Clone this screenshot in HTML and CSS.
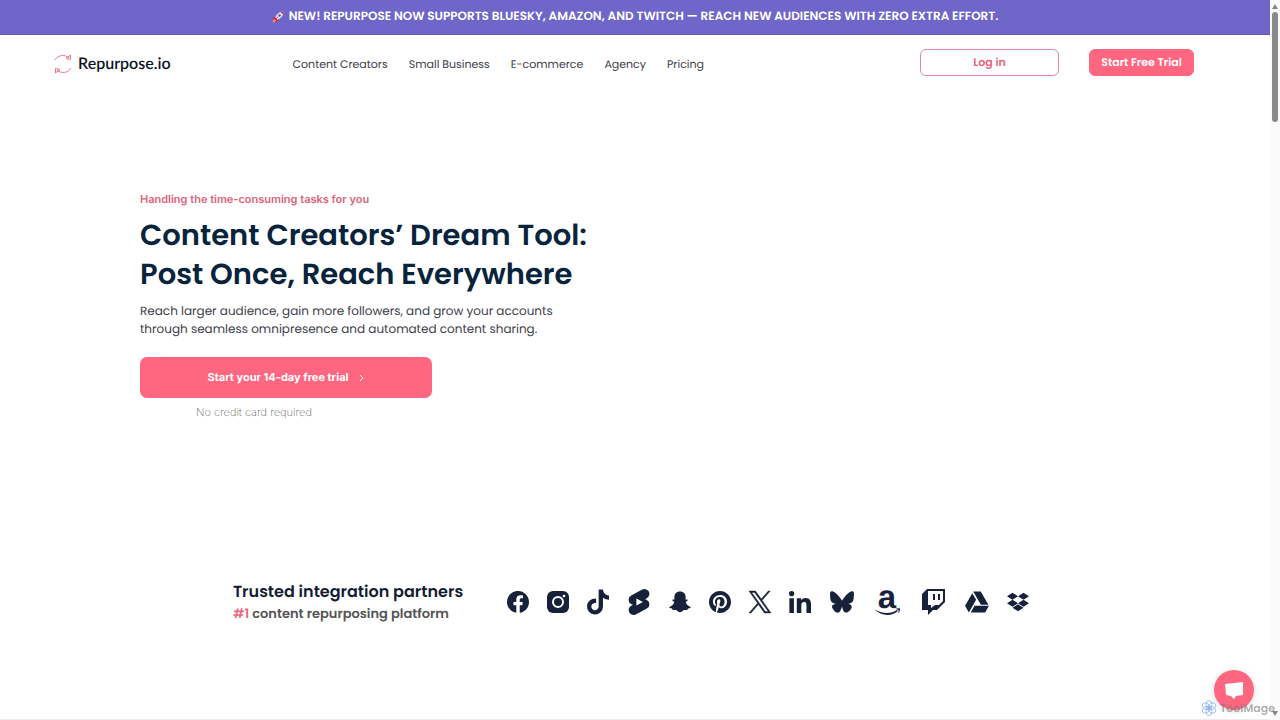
FILE: index.html
```html
<!DOCTYPE html>
<html lang="en">
<head>
<meta charset="UTF-8">
<title>Repurpose.io</title>
<meta name="viewport" content="width=device-width, initial-scale=1.0">
<link rel="stylesheet" href="styles.css">
</head>
<body>

	<div class="banner">
		<svg class="rocket" viewBox="0 0 24 24" aria-hidden="true">
			<path d="M7 10L2 14l1 3 5-1zM14 17l-4 5-3-1 1-5z" fill="#c9244d"/>
			<path d="M5 16c-3 1-3 4-4 7 3-1 6-1 7-4z" fill="#f59a3c"/>
			<path d="M6 14C9 6 15 1 23 1c0 8-5 14-13 17z" fill="#e9e4f2"/>
			<path d="M17 2l6-1-1 6zM6 13l5 5-2 2-5-5z" fill="#c9244d"/>
			<circle cx="15" cy="9" r="2.500" fill="#4a5a8c"/>
			<path d="M12 11l-5 6" stroke="#c9244d" stroke-width="2"/>
		</svg>
		<p>NEW! REPURPOSE NOW SUPPORTS BLUESKY, AMAZON, AND TWITCH — REACH NEW AUDIENCES WITH ZERO EXTRA EFFORT.</p>
	</div>

	<header class="header">
		<a class="logo" href="#">
			<svg viewBox="0 0 18 20" aria-hidden="true">
				<path d="M1 6A9 9 0 0 1 15 4M17 14A9 9 0 0 1 3 16M12 4.500l4.500 1V1zM6 15.500l-4.500-1V19z"/>
			</svg>
			<span>Repurpose.io</span>
		</a>
		<nav class="nav">
			<a href="#">Content Creators</a>
			<a href="#">Small Business</a>
			<a href="#">E-commerce</a>
			<a href="#">Agency</a>
			<a href="#">Pricing</a>
		</nav>
		<div class="actions">
			<a class="btn btn-outline" href="#">Log in</a>
			<a class="btn btn-fill" href="#">Start Free Trial</a>
		</div>
	</header>

	<main>
		<section class="hero">
			<p class="eyebrow">Handling the time-consuming tasks for you</p>
			<h1>Content Creators’ Dream Tool:<br>Post Once, Reach Everywhere</h1>
			<p class="lead">Reach larger audience, gain more followers, and grow your accounts<br>through seamless omnipresence and automated content sharing.</p>
			<a class="cta" href="#">Start your 14-day free trial
				<svg viewBox="0 0 6 8" aria-hidden="true"><path d="M1 1l3 3-3 3"/></svg>
			</a>
			<p class="note">No credit card required</p>
		</section>

		<section class="partners">
			<div>
				<h2>Trusted integration partners</h2>
				<p class="rank"><strong>#1</strong> content repurposing platform</p>
			</div>
			<div class="icons">
				<svg viewBox="8 8 496 496" role="img" aria-label="Facebook"><path d="M504 256C504 119 393 8 256 8S8 119 8 256c0 123.780 90.690 226.380 209.250 245V327.690h-63V256h63v-54.640c0-62.150 37-96.480 93.670-96.480 27.140 0 55.520 4.840 55.520 4.840v61h-31.280c-30.800 0-40.410 19.120-40.410 38.730V256h68.780l-11 71.690h-57.780V501C413.310 482.380 504 379.780 504 256z"/></svg>
				<svg viewBox="0 0 22 22" role="img" aria-label="Instagram"><rect width="22" height="22" rx="6"/><circle cx="11" cy="11" r="5" fill="none" stroke="#fff" stroke-width="2"/><circle cx="17" cy="5" r="1.300" fill="#fff"/></svg>
				<svg class="tall" viewBox="0 0 448 512" role="img" aria-label="TikTok"><path d="M448 209.910a210.060 210.060 0 0 1-122.770-39.250V349.380A162.550 162.550 0 1 1 185 188.310V278.200a74.620 74.620 0 1 0 52.230 71.180V0h88a121.180 121.180 0 0 0 1.860 22.170A122.180 122.180 0 0 0 381 102.390a121.430 121.430 0 0 0 67 20.140z"/></svg>
				<svg class="tall medium" viewBox="1 0 22 24" role="img" aria-label="YouTube Shorts"><path d="m18.931 9.990-1.441-.601 1.717-.913a4.480 4.480 0 0 0 1.874-6.078 4.506 4.506 0 0 0-6.090-1.874L4.792 5.929a4.504 4.504 0 0 0-2.402 4.193 4.521 4.521 0 0 0 2.666 3.904c.036.012 1.442.6 1.442.6l-1.706.901a4.510 4.510 0 0 0-2.369 3.967A4.528 4.528 0 0 0 6.930 24c.725 0 1.437-.174 2.080-.508l10.210-5.406a4.494 4.494 0 0 0 2.390-4.192 4.525 4.525 0 0 0-2.678-3.904ZM9.597 15.190V8.824l6.007 3.184z"/></svg>
				<svg viewBox="0 0 22 22" role="img" aria-label="Snapchat"><path d="M11 .5c3.600 0 5.600 2.300 5.600 5.500v2.600c.8.300 1.900-.4 2.200.3.300.8-1.700 1.300-1.900 2.200-.1 1.900 2.200 4 4.300 4.600.8.300.7.900-.2 1.300-.8.400-2 .4-2.200.7-.3.400-.1 1.100-.6 1.300-.8.200-2-.3-3.200 0-1.200.4-2.200 2.200-4 2.200s-2.800-1.800-4-2.200c-1.200-.3-2.400.2-3.200 0-.5-.2-.3-.9-.6-1.300-.2-.3-1.400-.3-2.200-.7-.9-.4-1-1-.2-1.300 2.100-.6 4.400-2.700 4.300-4.600-.2-.9-2.200-1.400-1.900-2.200.3-.7 1.400 0 2.200-.3V6C5.400 2.800 7.400.5 11 .5z"/></svg>
				<svg viewBox="0 8 496 496" role="img" aria-label="Pinterest"><path d="M496 256c0 137-111 248-248 248-25.600 0-50.200-3.900-73.400-11.100 10.100-16.500 25.200-43.500 30.800-65 3-11.600 15.400-59 15.400-59 8.100 15.400 31.700 28.500 56.800 28.500 74.800 0 128.700-68.800 128.700-154.300 0-81.900-66.900-143.200-152.900-143.200-107 0-163.900 71.800-163.900 150.100 0 36.400 19.400 81.700 50.300 96.100 4.700 2.200 7.200 1.200 8.300-3.300.8-3.400 5-20.300 6.900-28.100.6-2.500.3-4.700-1.700-7.100-10.100-12.500-18.300-35.300-18.300-56.600 0-54.700 41.400-107.600 112-107.600 60.900 0 103.600 41.500 103.600 100.900 0 67.100-33.900 113.600-78 113.600-24.300 0-42.600-20.100-36.700-44.800 7-29.500 20.500-61.300 20.500-82.600 0-19-10.200-34.900-31.400-34.900-24.900 0-44.900 25.700-44.900 60.200 0 22 7.400 36.800 7.400 36.800s-24.500 103.800-29 123.200c-5 21.400-3 51.600-.9 71.200C65.400 450.900 0 361.100 0 256 0 119 111 8 248 8s248 111 248 248z"/></svg>
				<svg viewBox="0 0 24 24" role="img" aria-label="X"><path class="x-mark" d="M14.258 10.152L23.176 0h-2.113l-7.747 8.813L7.133 0H0l9.352 13.328L0 23.973h2.113l8.176-9.309 6.531 9.309h7.133zm-2.895 3.293l-.949-1.328L2.875 1.560h3.246l6.086 8.523.945 1.328 7.910 11.078h-3.246z"/></svg>
				<svg viewBox="0 0 448 448" role="img" aria-label="LinkedIn"><path d="M100.280 448H7.400V148.900h92.880zM53.790 108.100C24.090 108.100 0 83.500 0 53.800a53.790 53.790 0 0 1 107.580 0c0 29.700-24.100 54.300-53.790 54.300zM447.900 448h-92.680V302.400c0-34.700-.7-79.200-48.290-79.200-48.290 0-55.690 37.700-55.690 76.700V448h-92.780V148.900h89.080v40.800h1.300c12.400-23.500 42.690-48.300 87.880-48.300 94 0 111.280 61.900 111.280 142.300V448z"/></svg>
				<svg class="wide" viewBox="0 1 24 22" role="img" aria-label="Bluesky"><path d="M12 10.800c-1.087-2.114-4.046-6.053-6.798-7.995C2.566.944 1.561 1.266.902 1.565.139 1.908 0 3.080 0 3.768c0 .690.378 5.650.624 6.479.815 2.736 3.713 3.660 6.383 3.364-3.912.580-7.387 2.005-2.830 7.078 5.013 5.190 6.870-1.113 7.823-4.308.953 3.195 2.050 9.271 7.733 4.308 4.267-4.308 1.172-6.498-2.740-7.078 2.670.297 5.568-.628 6.383-3.364.246-.828.624-5.790.624-6.478 0-.690-.139-1.861-.902-2.206-.659-.298-1.664-.620-4.300 1.240C16.046 4.748 13.087 8.687 12 10.800Z"/></svg>
				<svg class="tall wider" viewBox="0 0 28 26" role="img" aria-label="Amazon"><text class="amazon-a" x="14" y="19" text-anchor="middle">a</text><path d="M1 20c8 5 17 5 23 1l1 1c-7 6-17 5-24-2zM22 20c2-1 4-1 5-.5.500 1-.5 3.500-2 5 .3-1.500 1-3 .5-3.500s-2-.5-3.500-1z"/></svg>
				<svg class="tall wider" viewBox="-2 0 28 26" role="img" aria-label="Twitch"><path fill-rule="evenodd" d="M6 0L1 5v16h6v5l5-5h4l8-8V0zM7 2h15v10l-4 4h-4l-4 3v-3H7zM12 5h2v6h-2zM17 5h2v6h-2z"/></svg>
				<svg class="medium" viewBox="0 20 512 472" role="img" aria-label="Google Drive"><path d="M339 314.900L175.400 32h161.200l163.600 282.900H339zm-137.500 23.600L120.900 480h310.500L512 338.500H201.500zM154.100 67.400L0 338.500 80.600 480 237 208.800 154.100 67.400z"/></svg>
				<svg viewBox="0 0 528 512" role="img" aria-label="Dropbox"><path d="M264.400 116.300l-132 84.300 132 84.300-132 84.300L0 284.100l132.300-84.300L0 116.300 132.300 32l132.100 84.300zM131.600 395.700l132-84.300 132 84.300-132 84.300-132-84.300zm132.800-111.600l132-84.300-132-83.600L395.700 32 528 116.300l-132.300 84.300L528 284.800l-132.300 84.300-131.300-85z"/></svg>
			</div>
		</section>
	</main>

	<!-- chat launcher -->
	<button class="chat" type="button" aria-label="Open chat">
		<svg viewBox="0 0 20 17" aria-hidden="true"><path d="M1 2l18-2v13l-7 1-2 3-3-3-5-1z"/></svg>
	</button>

	<div class="watermark">
		<svg viewBox="0 0 16 16" aria-hidden="true">
			<circle cx="8" cy="8" r="2"/>
			<ellipse cx="8" cy="4.500" rx="3" ry="4"/>
			<ellipse cx="8" cy="4.500" rx="3" ry="4" transform="rotate(60 8 8)"/>
			<ellipse cx="8" cy="4.500" rx="3" ry="4" transform="rotate(120 8 8)"/>
			<ellipse cx="8" cy="4.500" rx="3" ry="4" transform="rotate(180 8 8)"/>
			<ellipse cx="8" cy="4.500" rx="3" ry="4" transform="rotate(240 8 8)"/>
			<ellipse cx="8" cy="4.500" rx="3" ry="4" transform="rotate(300 8 8)"/>
		</svg>
		<span>ToolMage</span>
	</div>

	<div class="scrollbar" aria-hidden="true">
		<svg viewBox="0 0 10 8"><path d="M5 2l3 5H2z"/></svg>
		<div class="thumb"></div>
		<svg class="down" viewBox="0 0 10 8"><path d="M5 6l3-5H2z"/></svg>
	</div>

</body>
</html>
```
FILE: styles.css
```css
* {
	box-sizing: border-box;
}

body {
	margin: 0;
	padding-right: 10px;
	min-height: 100vh;
	font-family: Poppins, Inter, sans-serif;
	text-rendering: geometricPrecision;
	color: #40404a;
	background-color: #fff;
	border-bottom: 1px solid #f3e9eb;
}

h1, h2, p {
	margin: 0;
}

a {
	color: inherit;
	text-decoration: none;
}

.banner {
	display: flex;
	justify-content: center;
	align-items: center;
	gap: 5px;
	padding: 9px 20px;
	color: #fff;
	background-color: #6e66c8;
	border-bottom: 1px solid #655bb5;
	font-size: 12px;
	font-weight: 600;
	line-height: 16px;
}

.rocket {
	width: 12px;
	height: 12px;
}

/* header */
.header {
	display: flex;
	align-items: center;
	padding: 14px 76px 14px 54px;
}

.logo {
	display: flex;
	align-items: center;
	gap: 6px;
	margin-right: 122px;
	padding-top: 2px;
	color: #0b1526;
	font-family: Lato, sans-serif;
	font-size: 16px;
	font-weight: 600;
}

.logo svg {
	width: 18px;
	height: 20px;
	fill: none;
	stroke: #e8788a;
}

.nav {
	display: flex;
	gap: 21px;
	padding-top: 3px;
	font-size: 11px;
}

.actions {
	display: flex;
	gap: 30px;
	margin-left: auto;
}

.btn {
	padding: 4px 11px;
	border: 1px solid #ff6680;
	border-radius: 6px;
	font-size: 11px;
	font-weight: 600;
	line-height: 17px;
	text-align: center;
	white-space: nowrap;
}

.btn-outline {
	min-width: 139px;
	color: #e8637b;
	border-color: #dc8a9b;
}

.btn-fill {
	min-width: 105px;
	color: #fff;
	background-color: #ff6680;
}

/* hero */
.hero {
	display: flex;
	flex-direction: column;
	align-items: flex-start;
	max-width: 990px;
	margin: 0 auto;
	padding: 101px 0 160px;
}

.eyebrow {
	color: #e0637a;
	font-family: Inter, sans-serif;
	font-size: 11px;
	font-weight: 600;
	line-height: 16px;
}

h1 {
	margin-top: 10px;
	color: #08233c;
	font-size: 29px;
	font-weight: 600;
	line-height: 39px;
}

.lead {
	margin-top: 8px;
	font-size: 12px;
	line-height: 18px;
}

.cta {
	display: flex;
	justify-content: center;
	align-items: center;
	gap: 10px;
	width: 292px;
	margin-top: 18px;
	padding: 12px;
	color: #fff;
	background-color: #ff6680;
	border-radius: 7px;
	font-family: Inter, sans-serif;
	font-size: 11px;
	font-weight: 700;
	line-height: 17px;
}

.cta svg {
	width: 6px;
	height: 8px;
	fill: none;
	stroke: #fff;
}

.note {
	margin-top: 6px;
	padding-left: 56px;
	color: #666;
	font-family: Inter, sans-serif;
	font-size: 11px;
	font-weight: 200;
	line-height: 16px;
}

/* partners */
.partners {
	display: flex;
	justify-content: center;
	align-items: center;
	gap: 44px;
	padding: 0 20px 88px 12px;
	white-space: nowrap;
}

h2 {
	color: #131c33;
	font-size: 16px;
	font-weight: 600;
	line-height: 24px;
}

.rank {
	color: #555;
	font-size: 13px;
	font-weight: 600;
	line-height: 20px;
}

.rank strong {
	color: #ea6a80;
	font-weight: 600;
}

.icons {
	display: flex;
	align-items: center;
	gap: 18px;
}

.icons svg {
	width: 22px;
	height: 22px;
	fill: #18213a;
	overflow: visible;
}

.icons .medium {
	width: 24px;
}

.icons .wide {
	width: 26px;
}

.icons .wider {
	width: 28px;
}

.icons .tall {
	height: 26px;
}

.x-mark {
	stroke: #18213a;
	stroke-width: 0.5;
}

.amazon-a {
	font-family: "Liberation Sans", sans-serif;
	font-size: 33px;
	font-weight: 700;
}

/* floating items */
.chat {
	position: fixed;
	right: 26px;
	bottom: 10px;
	display: flex;
	justify-content: center;
	align-items: center;
	width: 40px;
	height: 40px;
	padding: 0;
	border: 0;
	border-radius: 50%;
	background-color: #ff6680;
	box-shadow: 0 1px 6px rgba(0, 0, 0, 0.15);
}

.chat svg {
	width: 20px;
	height: 17px;
	fill: #fff;
}

.watermark {
	position: fixed;
	right: 5px;
	bottom: 4px;
	z-index: 2;
	display: flex;
	align-items: center;
	gap: 3px;
	color: rgba(120, 120, 120, 0.6);
	font-size: 11px;
	font-weight: 600;
	line-height: 16px;
}

.watermark svg {
	width: 16px;
	height: 16px;
	fill: none;
	stroke: #8db4ee;
	stroke-width: 0.8;
}

.scrollbar {
	position: fixed;
	top: 0;
	right: 0;
	bottom: 0;
	display: flex;
	flex-direction: column;
	align-items: center;
	gap: 2px;
	width: 10px;
	padding: 2px 0;
	background-color: #fbfbfb;
}

.scrollbar svg {
	width: 10px;
	height: 8px;
	fill: #858585;
}

.scrollbar .down {
	margin-top: auto;
}

.thumb {
	width: 6px;
	height: 110px;
	border-radius: 3px;
	background-color: #8a8a8a;
}
```
